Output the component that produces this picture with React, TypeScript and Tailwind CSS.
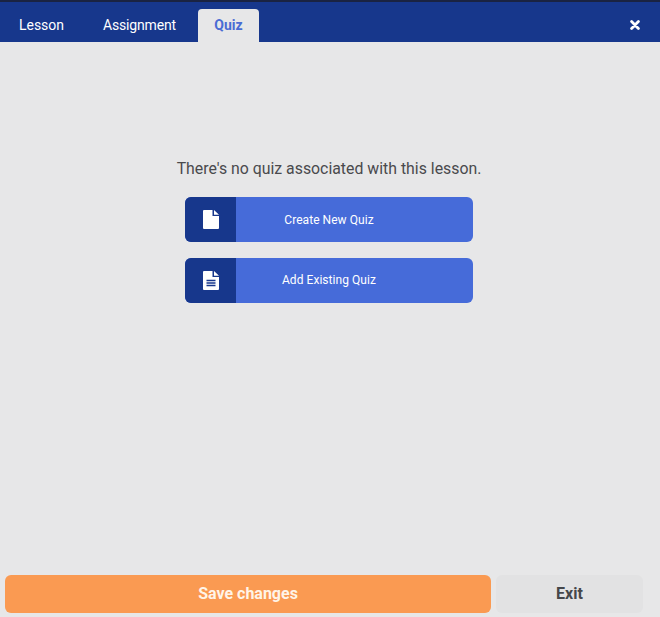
export default function App() {
  return (
    <div className="flex h-[617px] w-[660px] flex-col overflow-hidden bg-[#e7e7e8] font-['Roboto',sans-serif]">
      <div className="h-[2px] bg-[#1a2342]" />
      <div className="flex h-[40px] items-end justify-between bg-[#17378c]">
        <div className="flex h-full items-end">
          <div className="flex h-[33px] w-[83px] items-center justify-center text-[14px] text-white">Lesson</div>
          <div className="flex h-[33px] w-[113px] items-center justify-center text-[14px] tracking-[-0.15px] text-white">Assignment</div>
          <div className="ml-[2px] flex h-[33px] w-[61px] items-center justify-center rounded-t-[4px] bg-[#e7e7e8] text-[14px] font-bold text-[#4a6cd4]">Quiz</div>
        </div>
        <svg className="mr-[20px] mb-[12px]" width="10" height="10" viewBox="0 0 10 10">
          <path d="M1.6 1.6 L8.4 8.4 M8.4 1.6 L1.6 8.4" stroke="#fff" strokeWidth="2.8" strokeLinecap="round" />
        </svg>
      </div>

      <div className="flex flex-1 flex-col items-center pr-[2px]">
        <p className="mt-[117px] text-[15.85px] leading-[20px] text-[#4a4a4d]">There's no quiz associated with this lesson.</p>
        <div className="mt-[18px] flex flex-col gap-[16px]">
          <QuizButton label="Create New Quiz" />
          <QuizButton label="Add Existing Quiz" lines />
        </div>
      </div>

      <div className="mb-[4px] flex h-[38px] gap-[5px] pl-[5px]">
        <button className="w-[486px] rounded-[6px] bg-[#fa9a52] text-[16px] font-bold text-[#fff4e8]">Save changes</button>
        <button className="w-[147px] rounded-[6px] bg-[#e2e2e3] text-[16px] font-bold text-[#45474b]">Exit</button>
      </div>
    </div>
  );
}

function QuizButton({ label, lines }: { label: string; lines?: boolean }) {
  return (
    <button className="flex h-[45px] w-[288px] overflow-hidden rounded-[6px] bg-[#466bd9] text-white">
      <span className="flex h-full w-[51px] items-center justify-center bg-[#17378c]">
        <svg width="16" height="19" viewBox="0 0 16 19">
          <path d="M1 0 H9.5 V6 H16 V18 a1 1 0 0 1 -1 1 H1 a1 1 0 0 1 -1 -1 V1 a1 1 0 0 1 1 -1 Z M11 0 L16 4.7 H11 Z" fill="#fff" />
          {lines && <path d="M3.5 9.5 H12.5 M3.5 12 H12.5 M3.5 14.5 H12.5" stroke="#17378c" strokeWidth="1.3" />}
        </svg>
      </span>
      <span className={lines ? "flex h-full flex-1 items-center justify-center pr-[51px] pb-[2px] text-[12px] tracking-[0.05px]" : "flex h-full flex-1 items-center justify-center pr-[51px] text-[12px] tracking-[0.05px]"}>{label}</span>
    </button>
  );
}
